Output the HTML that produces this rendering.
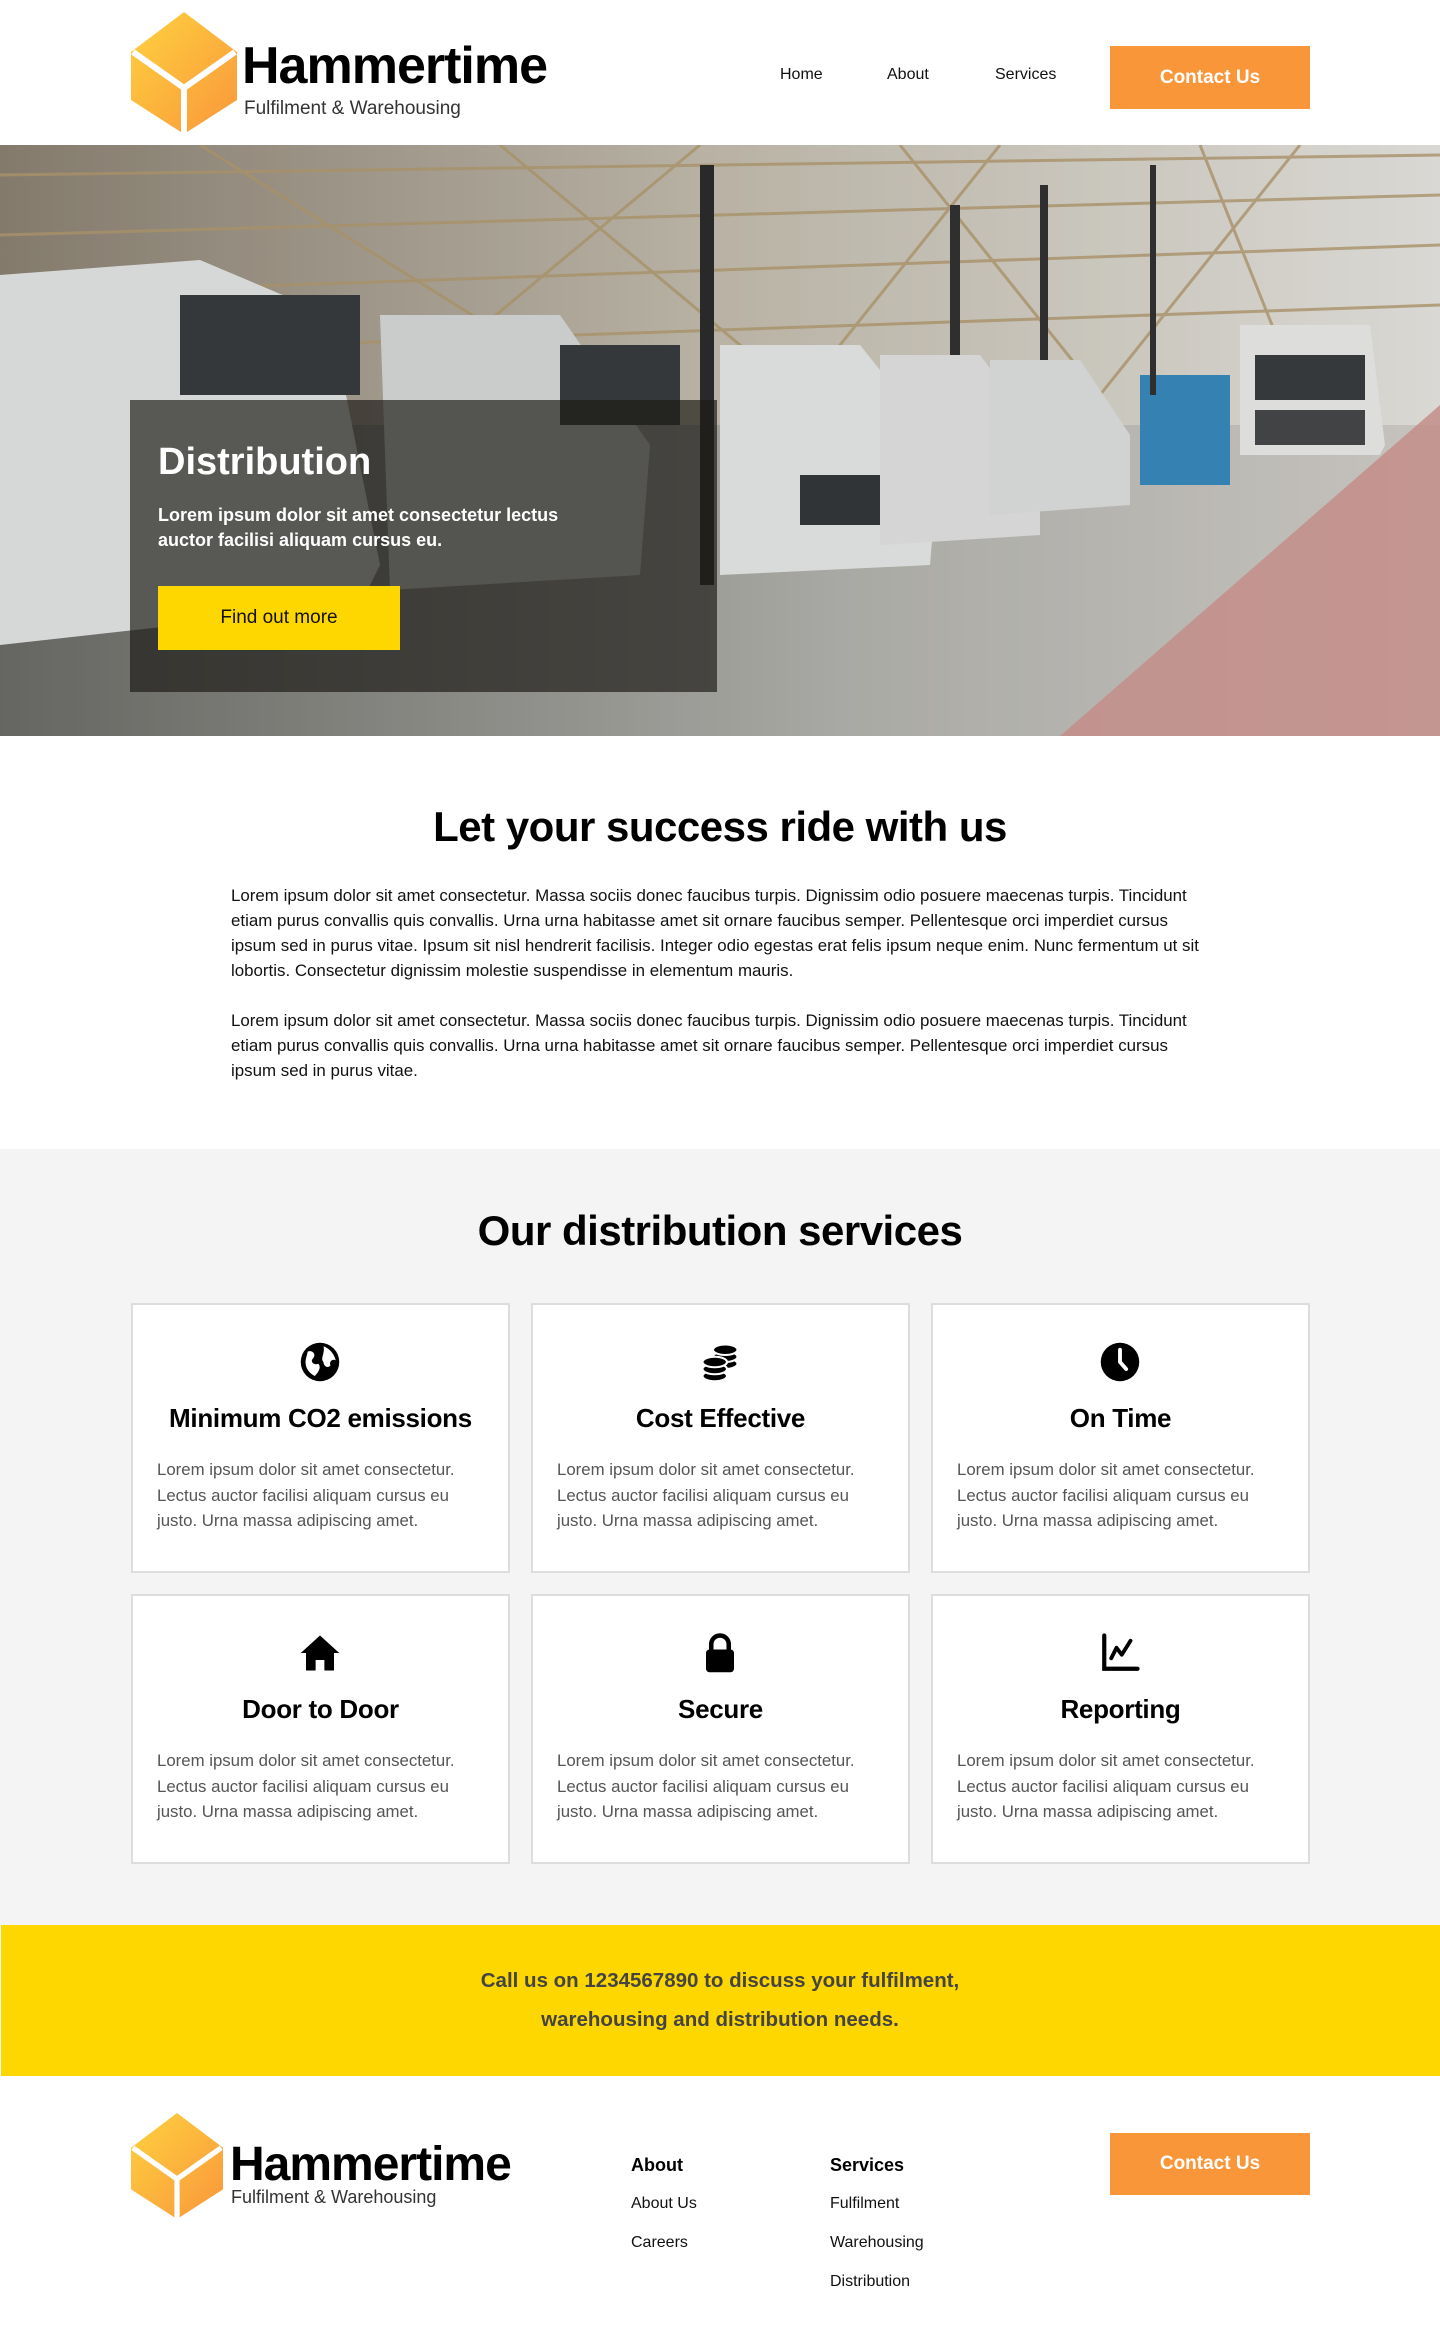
<!DOCTYPE html>
<html><head><meta charset="utf-8">
<style>
*{margin:0;padding:0;box-sizing:border-box}
body{width:1440px;height:2340px;font-family:"Liberation Sans",Arial,sans-serif;background:#fff;color:#000;position:relative;overflow:hidden}
.abs{position:absolute}
.btn-o{position:absolute;background:#F9963A;color:#fff;font-weight:bold;font-size:19px;display:flex;align-items:center;justify-content:center}
.nav{position:absolute;top:64px;font-size:16px;color:#111}
.card{position:absolute;width:379px;height:270px;background:#fff;border:2px solid #ddd;text-align:center}
.card svg{position:absolute;left:166px;top:36px}
.card h3{position:absolute;top:98px;left:0;right:0;font-size:26px;font-weight:bold;letter-spacing:-0.3px}
.card p{position:absolute;top:152px;left:24px;text-align:left;font-size:16.8px;line-height:25.5px;color:#555;white-space:nowrap}
</style></head><body>

<!-- header -->
<svg class="abs" style="left:131px;top:12px" width="106" height="122" viewBox="0 0 106 122">
<defs><linearGradient id="g" x1="0" y1="0" x2="1" y2="1"><stop offset="0" stop-color="#FFD23F"/><stop offset="1" stop-color="#F9963A"/></linearGradient></defs>
<polygon points="53,0 106,40 106,88 53,122 0,88 0,40" fill="url(#g)"/>
<polyline points="2,40 53,76 104,40" fill="none" stroke="#fff" stroke-width="6"/>
<line x1="53" y1="76" x2="53" y2="122" stroke="#fff" stroke-width="6"/>
</svg>
<div class="abs" style="left:242px;top:40px;font-size:52px;font-weight:bold;letter-spacing:-1px;line-height:1">Hammertime</div>
<div class="abs" style="left:244px;top:98px;font-size:19px;color:#333">Fulfilment &amp; Warehousing</div>
<div class="nav" style="left:780px;top:66px">Home</div>
<div class="nav" style="left:887px;top:66px">About</div>
<div class="nav" style="left:995px;top:66px">Services</div>
<div class="btn-o" style="left:1110px;top:46px;width:200px;height:63px">Contact Us</div>

<!-- hero -->
<div class="abs" style="left:0;top:145px;width:1440px;height:591px;overflow:hidden;background:#b8b6b0">
  <svg width="1440" height="591" viewBox="0 0 1440 591" style="position:absolute;left:0;top:0">
    <defs>
      <linearGradient id="fl" x1="0" y1="0" x2="1" y2="0"><stop offset="0" stop-color="#6e6e6a"/><stop offset="0.6" stop-color="#b9b9b4"/><stop offset="1" stop-color="#d8d4ce"/></linearGradient>
      <linearGradient id="ce" x1="0" y1="0" x2="1" y2="0"><stop offset="0" stop-color="#8f8576"/><stop offset="0.5" stop-color="#c9c2b3"/><stop offset="1" stop-color="#ecebe6"/></linearGradient>
    </defs>
    <rect x="0" y="0" width="1440" height="300" fill="url(#ce)"/>
    <g stroke="#b79e72" stroke-width="3" opacity="0.8">
      <line x1="0" y1="30" x2="1440" y2="10"/><line x1="0" y1="90" x2="1440" y2="50"/><line x1="0" y1="150" x2="1440" y2="100"/><line x1="0" y1="210" x2="1440" y2="160"/>
      <line x1="200" y1="0" x2="600" y2="250"/><line x1="500" y1="0" x2="800" y2="250"/><line x1="900" y1="0" x2="1100" y2="250"/><line x1="1200" y1="0" x2="1300" y2="250"/>
      <line x1="400" y1="250" x2="700" y2="0"/><line x1="800" y1="250" x2="1000" y2="0"/><line x1="1100" y1="250" x2="1300" y2="0"/>
    </g>
    <rect x="0" y="280" width="1440" height="311" fill="url(#fl)"/>
    <polygon points="1060,591 1440,260 1440,591" fill="#d59a95" opacity="0.85"/>
    <rect x="1140" y="230" width="90" height="110" fill="#3a8cc0"/>
    <rect x="1150" y="20" width="6" height="230" fill="#333"/>
    <rect x="1040" y="40" width="8" height="220" fill="#333"/>
    <rect x="950" y="60" width="10" height="260" fill="#333"/>
    <rect x="700" y="20" width="14" height="420" fill="#2d2d2d"/>
    <path d="M0,130 L200,115 L330,170 L380,420 L360,460 L0,500 Z" fill="#e9ebeb"/>
    <path d="M380,170 L560,170 L650,300 L640,430 L390,445 Z" fill="#dcdedd"/>
    <path d="M720,200 L860,200 L940,300 L930,420 L720,430 Z" fill="#eceeed"/>
    <rect x="800" y="330" width="130" height="50" fill="#36393b"/>
    <path d="M880,210 L980,210 L1040,290 L1040,390 L880,400 Z" fill="#e6e8e7"/>
    <path d="M990,215 L1080,215 L1130,290 L1130,360 L990,370 Z" fill="#e3e5e4"/>
    <path d="M1240,180 L1370,180 L1385,300 L1380,310 L1240,310 Z" fill="#f0f0ee"/>
    <rect x="1255" y="210" width="110" height="45" fill="#3b3e40"/>
    <rect x="1255" y="265" width="110" height="35" fill="#48494b"/>
    <rect x="180" y="150" width="180" height="100" fill="#3a3d3f"/>
    <rect x="560" y="200" width="120" height="80" fill="#3a3d3f"/>
    <rect x="0" y="0" width="1440" height="591" fill="rgba(0,0,0,0.08)"/>
  </svg>
  <div class="abs" style="left:130px;top:255px;width:587px;height:292px;background:rgba(28,26,22,0.68)"></div>
  <div class="abs" style="left:158px;top:296px;font-size:38px;font-weight:bold;color:#fff">Distribution</div>
  <div class="abs" style="left:158px;top:358px;font-size:18px;font-weight:bold;color:#fff;line-height:25px">Lorem ipsum dolor sit amet consectetur lectus<br>auctor facilisi aliquam cursus eu.</div>
  <div class="abs" style="left:158px;top:441px;width:242px;height:64px;background:#FFD700;color:#111;font-size:19px;display:flex;align-items:center;justify-content:center">Find out more</div>
</div>

<!-- intro -->
<div class="abs" style="left:0;right:0;top:803px;text-align:center;font-size:42px;font-weight:bold;letter-spacing:-0.5px">Let your success ride with us</div>
<div class="abs" style="left:231px;top:883px;font-size:16.9px;line-height:25px;color:#111;white-space:nowrap">
Lorem ipsum dolor sit amet consectetur. Massa sociis donec faucibus turpis. Dignissim odio posuere maecenas turpis. Tincidunt<br>
etiam purus convallis quis convallis. Urna urna habitasse amet sit ornare faucibus semper. Pellentesque orci imperdiet cursus<br>
ipsum sed in purus vitae. Ipsum sit nisl hendrerit facilisis. Integer odio egestas erat felis ipsum neque enim. Nunc fermentum ut sit<br>
lobortis. Consectetur dignissim molestie suspendisse in elementum mauris.<br><br>
Lorem ipsum dolor sit amet consectetur. Massa sociis donec faucibus turpis. Dignissim odio posuere maecenas turpis. Tincidunt<br>
etiam purus convallis quis convallis. Urna urna habitasse amet sit ornare faucibus semper. Pellentesque orci imperdiet cursus<br>
ipsum sed in purus vitae.</div>

<!-- services -->
<div class="abs" style="left:0;top:1149px;width:1440px;height:776px;background:#f4f4f4"></div>
<div class="abs" style="left:0;right:0;top:1207px;text-align:center;font-size:42px;font-weight:bold;letter-spacing:-0.5px">Our distribution services</div>

<div class="card" style="left:131px;top:1303px">
<svg width="42" height="42" viewBox="0 0 24 24"><circle cx="12" cy="12" r="11" fill="#000"/><path d="M5,6 C8,5 10,8 8,10 C6,12 9,14 11,13 C13,15 11,18 9,20 C5,18 3,14 4,10 Z M14,3 C17,4 20,7 21,11 C19,10 17,12 18,14 C16,16 14,14 14,12 C12,10 15,7 14,3 Z" fill="#fff"/></svg>
<h3>Minimum CO2 emissions</h3>
<p>Lorem ipsum dolor sit amet consectetur.<br>Lectus auctor facilisi aliquam cursus eu<br>justo. Urna massa adipiscing amet.</p></div>

<div class="card" style="left:531px;top:1303px">
<svg width="42" height="42" viewBox="0 0 24 24"><g fill="#000" stroke="#fff" stroke-width="1.2"><ellipse cx="15" cy="13" rx="7" ry="3"/><ellipse cx="15" cy="9" rx="7" ry="3"/><ellipse cx="15" cy="5" rx="7" ry="3"/><ellipse cx="9" cy="20" rx="7" ry="3"/><ellipse cx="9" cy="16" rx="7" ry="3"/><ellipse cx="9" cy="12" rx="7" ry="3"/></g></svg>
<h3>Cost Effective</h3>
<p>Lorem ipsum dolor sit amet consectetur.<br>Lectus auctor facilisi aliquam cursus eu<br>justo. Urna massa adipiscing amet.</p></div>

<div class="card" style="left:931px;top:1303px">
<svg width="42" height="42" viewBox="0 0 24 24"><circle cx="12" cy="12" r="11" fill="#000"/><path d="M12,5 V12 L15.5,16" stroke="#fff" stroke-width="2.2" fill="none" stroke-linecap="round"/></svg>
<h3>On Time</h3>
<p>Lorem ipsum dolor sit amet consectetur.<br>Lectus auctor facilisi aliquam cursus eu<br>justo. Urna massa adipiscing amet.</p></div>

<div class="card" style="left:131px;top:1594px">
<svg width="42" height="42" viewBox="0 0 24 24"><path d="M12,2 L23,12 H20 V22 H14.5 V16 H9.5 V22 H4 V12 H1 Z" fill="#000"/></svg>
<h3>Door to Door</h3>
<p>Lorem ipsum dolor sit amet consectetur.<br>Lectus auctor facilisi aliquam cursus eu<br>justo. Urna massa adipiscing amet.</p></div>

<div class="card" style="left:531px;top:1594px">
<svg width="42" height="42" viewBox="0 0 24 24"><path d="M7,10 V7 A5,5 0 0 1 17,7 V10" stroke="#000" stroke-width="2.6" fill="none"/><rect x="4" y="10" width="16" height="13" rx="2" fill="#000"/></svg>
<h3>Secure</h3>
<p>Lorem ipsum dolor sit amet consectetur.<br>Lectus auctor facilisi aliquam cursus eu<br>justo. Urna massa adipiscing amet.</p></div>

<div class="card" style="left:931px;top:1594px">
<svg width="42" height="42" viewBox="0 0 24 24"><path d="M3,2 V21 H22" stroke="#000" stroke-width="2.4" fill="none" stroke-linecap="round"/><path d="M7,15 L10,9 L13,13 L18,5" stroke="#000" stroke-width="2.2" fill="none" stroke-linecap="round" stroke-linejoin="round"/></svg>
<h3>Reporting</h3>
<p>Lorem ipsum dolor sit amet consectetur.<br>Lectus auctor facilisi aliquam cursus eu<br>justo. Urna massa adipiscing amet.</p></div>

<!-- CTA -->
<div class="abs" style="left:1px;top:1925px;width:1439px;height:151px;background:#FFD700"></div>
<div class="abs" style="left:0;right:0;top:1961px;text-align:center;font-size:20.5px;font-weight:bold;color:#444;line-height:39px">Call us on 1234567890 to discuss your fulfilment,<br>warehousing and distribution needs.</div>

<!-- footer -->
<svg class="abs" style="left:131px;top:2110px" width="92" height="112" viewBox="0 0 106 122">
<polygon points="53,0 106,40 106,88 53,122 0,88 0,40" fill="url(#g)"/>
<polyline points="2,40 53,76 104,40" fill="none" stroke="#fff" stroke-width="6"/>
<line x1="53" y1="76" x2="53" y2="122" stroke="#fff" stroke-width="6"/>
</svg>
<div class="abs" style="left:230px;top:2141px;font-size:48px;font-weight:bold;letter-spacing:-1px;line-height:1">Hammertime</div>
<div class="abs" style="left:231px;top:2187px;font-size:18px;color:#333">Fulfilment &amp; Warehousing</div>
<div class="abs" style="left:631px;top:2155px;font-size:18px;font-weight:bold">About</div>
<div class="abs" style="left:631px;top:2195px;font-size:16px;color:#111">About Us</div>
<div class="abs" style="left:631px;top:2234px;font-size:16px;color:#111">Careers</div>
<div class="abs" style="left:830px;top:2155px;font-size:18px;font-weight:bold">Services</div>
<div class="abs" style="left:830px;top:2195px;font-size:16px;color:#111">Fulfilment</div>
<div class="abs" style="left:830px;top:2234px;font-size:16px;color:#111">Warehousing</div>
<div class="abs" style="left:830px;top:2273px;font-size:16px;color:#111">Distribution</div>
<div class="btn-o" style="left:1110px;top:2133px;width:200px;height:62px">Contact Us</div>
</body></html>
